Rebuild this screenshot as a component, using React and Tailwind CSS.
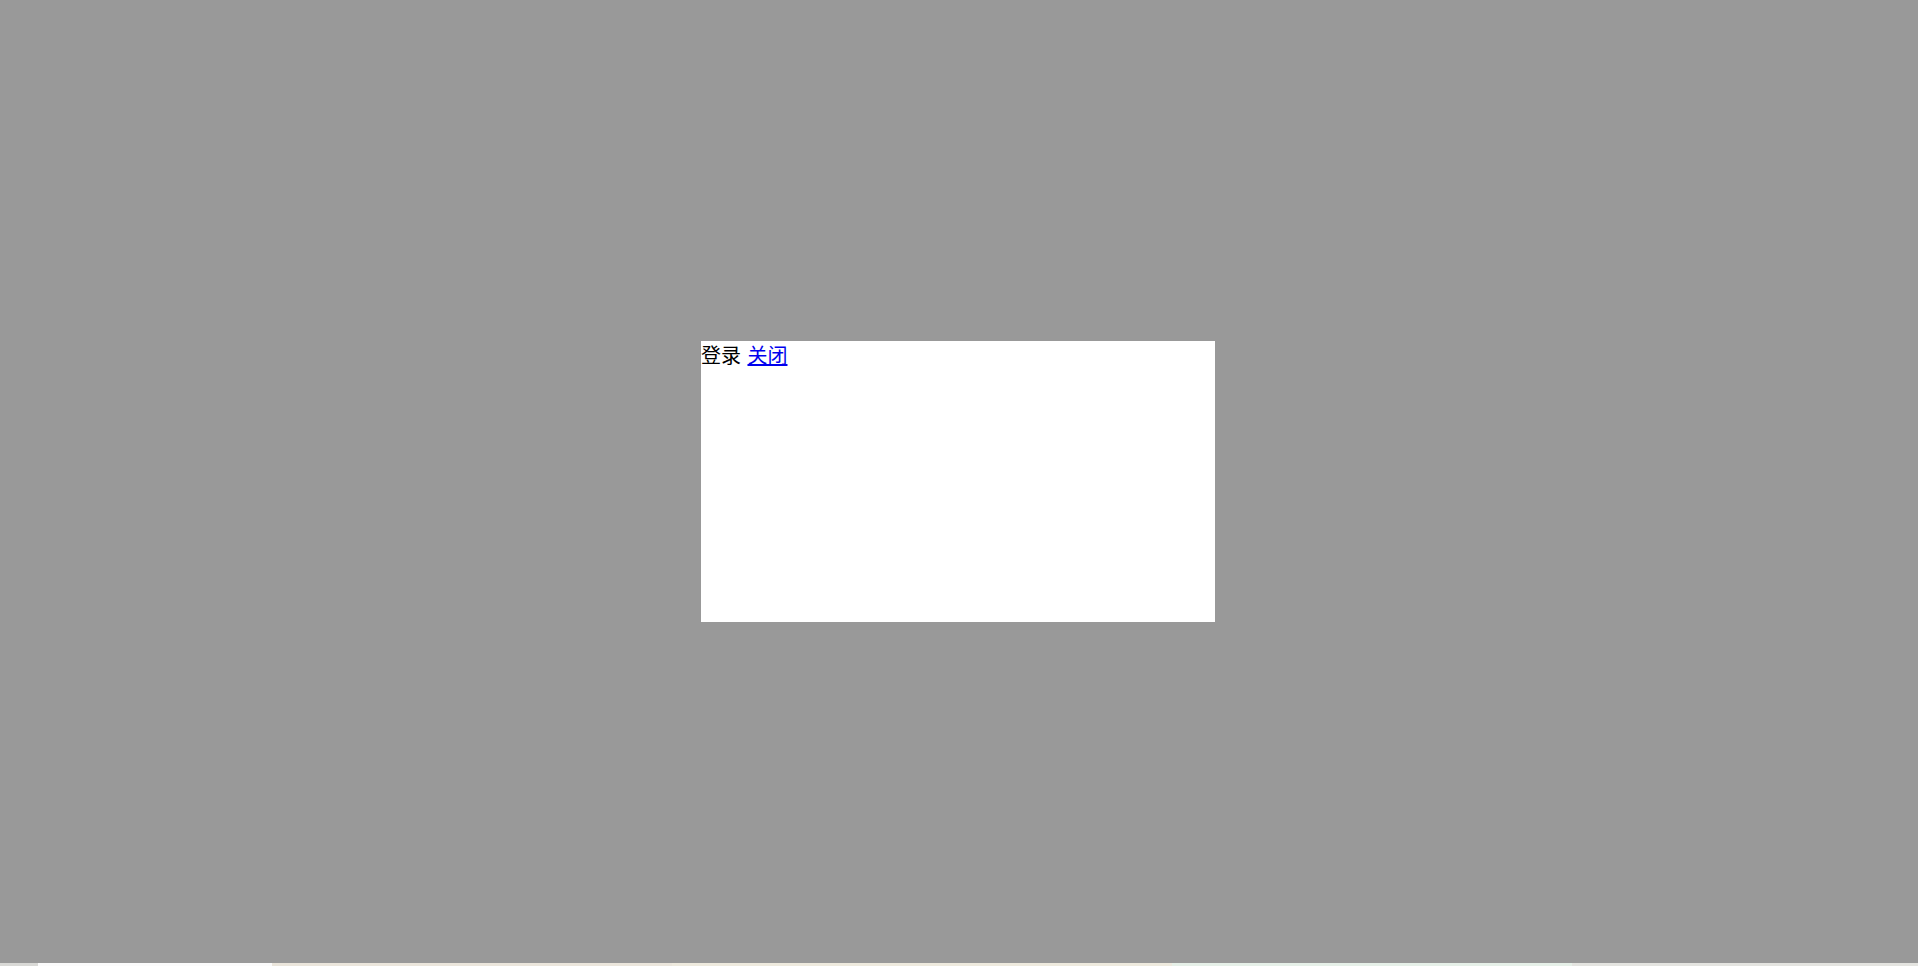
export default function App() {
  return (
    <div className="relative w-full h-[966px] overflow-hidden bg-[#ecebe6]">
      {/* page under the overlay, only a thin strip shows at the bottom */}
      <div className="absolute left-0 right-0 bottom-0 h-[3px] flex">
        <div className="w-[38px] bg-[#d9d9d6]" />
        <div className="w-[234px] bg-[#fbfbfb]" />
        <div className="w-[400px] bg-[#ebe6dc]" />
        <div className="w-[500px] bg-[#eeeade]" />
        <div className="w-[400px] bg-[#e6f0e8]" />
        <div className="flex-1 bg-[#e4e4e0]" />
      </div>

      {/* mask */}
      <div className="absolute left-0 right-0 top-0 h-[963px] bg-[#999999]" />

      {/* dialog */}
      <div
        className="absolute left-[701px] top-[341px] w-[514px] h-[281px] bg-white pt-[1px] text-[20px] leading-[26px] text-black [word-spacing:2px]"
        style={{ fontFamily: '"Microsoft YaHei", "Noto Sans CJK SC", sans-serif' }}
      >
        登录 <a href="#" className="text-[#0000ee] underline">关闭</a>
      </div>
    </div>
  )
}
